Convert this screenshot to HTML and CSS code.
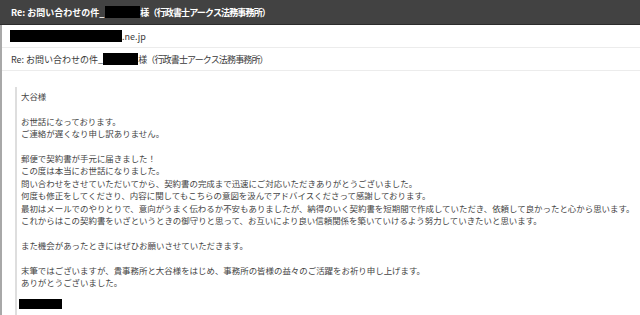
FILE: index.html
```html
<!DOCTYPE html>
<html lang="ja">
<head>
    <meta charset="UTF-8">
    <meta name="viewport" content="width=device-width, initial-scale=1.0">
    <title>Re: お問い合わせの件</title>
    <link rel="stylesheet" href="styles.css">
</head>
<body>
    <div class="titleBar">
        <span>Re: お問い合わせの件_</span><span class="redact titleRedact"></span><span class="tight">様（行政書士アークス法務事務所）</span>
    </div>

    <div class="mailPane">
        <div class="metaRow">
            <span class="redact fromRedact"></span><span>.ne.jp</span>
        </div>
        <div class="metaRow">
            <span>Re: お問い合わせの件_</span><span class="redact subjectRedact"></span><span class="tight">様（行政書士アークス法務事務所）</span>
        </div>

        <div class="mailBody">
            <div class="quote">
                <p>大谷様</p>
                <p>お世話になっております。<br>ご連絡が遅くなり申し訳ありません。</p>
                <p>郵便で契約書が手元に届きました！<br>
                この度は本当にお世話になりました。<br>
                問い合わせをさせていただいてから、契約書の完成まで迅速にご対応いただきありがとうございました。<br>
                何度も修正をしてくださり、内容に関してもこちらの意図を汲んでアドバイスくださって感謝しております。<br>
                最初はメールでのやりとりで、意向がうまく伝わるか不安もありましたが、納得のいく契約書を短期間で作成していただき、依頼して良かったと心から思います。<br>
                これからはこの契約書をいざというときの御守りと思って、お互いにより良い信頼関係を築いていけるよう努力していきたいと思います。</p>
                <p>また機会があったときにはぜひお願いさせていただきます。</p>
                <p>末筆ではございますが、貴事務所と大谷様をはじめ、事務所の皆様の益々のご活躍をお祈り申し上げます。<br>ありがとうございました。</p>
                <div class="redact signRedact"></div>
            </div>
        </div>
    </div>
</body>
</html>
```

FILE: styles.css
```css
/* Basic styling */
body {
    margin: 0;
    background: #fff;
    font-family: "Noto Sans CJK JP", "Noto Sans", sans-serif;
    overflow: hidden;
}
.titleBar {
    height: 24px;
    background-color: #424242;
    border-bottom: 1px solid #2c2c2c;
    color: #fff;
    font-size: 9px;
    font-weight: bold;
    padding-left: 11px;
    display: flex;
    align-items: center;
    white-space: nowrap;
}
.tight {
    letter-spacing: -0.85px;
}
.mailPane {
    border-left: 2px solid #a8a8a8;
    height: 300px;
}
.metaRow {
    height: 22px;
    border-bottom: 1px solid #ececec;
    padding-left: 9px;
    display: flex;
    align-items: center;
    font-size: 9px;
    color: #3a3a3a;
    white-space: nowrap;
}
.redact {
    display: inline-block;
    background: #000;
}
.titleRedact {
    width: 35px;
    height: 12px;
    margin-left: 1px;
}
.fromRedact {
    width: 112px;
    height: 12px;
    margin-left: -1px;
}
.subjectRedact {
    width: 35px;
    height: 12px;
}
.mailBody {
    padding-top: 16px;
    padding-left: 13px;
}
.quote {
    border-left: 2px solid #dedede;
    padding: 3px 0 10px 4px;
    font-size: 8.45px;
    line-height: 12.4px;
    color: #444;
    white-space: nowrap;
}
.quote p {
    margin: 0 0 12.4px 0;
}
.signRedact {
    display: block;
    width: 43px;
    height: 10px;
    margin-left: -2px;
    margin-top: -2px;
}
```
